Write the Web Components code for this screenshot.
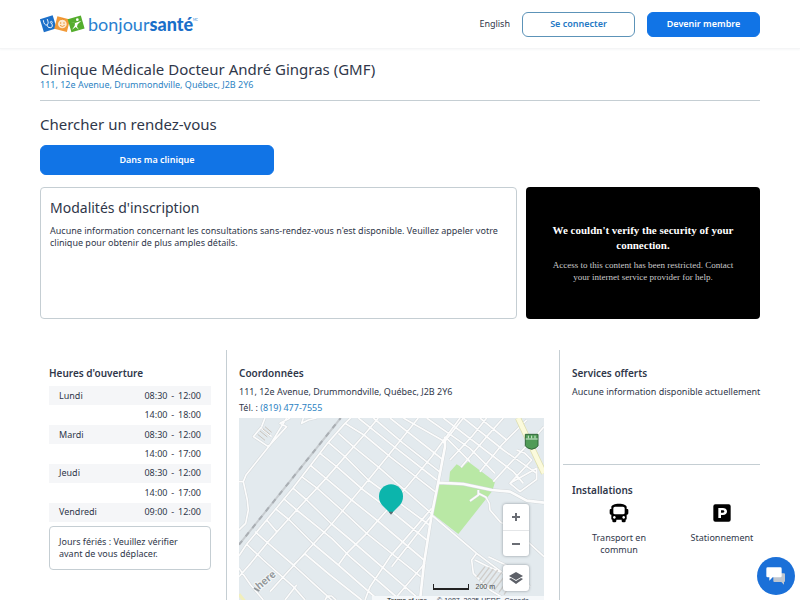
<!DOCTYPE html>
<html lang="fr">
<head>
<meta charset="utf-8">
<title>Clinique Médicale Docteur André Gingras (GMF) - Bonjour-santé</title>
<style>
  html { --ink: #2f374a; --blue: #1174e6; --link: #2d83c3; --rule: #c5ced3; }
  body { margin: 0; background: #fff; color: var(--ink); font: 9px/12px "Noto Sans", "Open Sans", sans-serif; }
</style>
</head>
<body>
<clinic-page></clinic-page>

<script>
const define = (name, html, setup) => {
  const template = document.createElement('template');
  template.innerHTML = '<style>*{box-sizing:border-box}h1,h2,h3,p{margin:0;font-weight:400}a{color:var(--link);text-decoration:none}button{font:inherit;cursor:pointer}</style>' + html;
  customElements.define(name, class extends HTMLElement {
    constructor() {
      super();
      this.attachShadow({ mode: 'open' }).append(template.content.cloneNode(true));
    }
    connectedCallback() { if (setup) setup(this, this.shadowRoot); }
  });
};

define('brand-logo', `
<style>
  :host { display: block; }
  a { display: flex; align-items: center; gap: 3px; color: #1f78d0; }
  .mark { width: 45px; height: 20px; flex: none; }
  .name { font: 18px/24px Lato, sans-serif; color: #2b80cf; }
  b { font-weight: 900; color: #1a6fc9; }
  sup { font-size: 3px; line-height: 4px; vertical-align: 10px; }
</style>
<a href="#" aria-label="bonjoursanté">
  <svg class="mark" viewBox="0 0 135 60" fill="none">
    <g transform="rotate(-17 24 30)"><rect x="5" y="9" width="40" height="41" fill="#1d70c9"/>
      <path d="M14 15q-3 15 6 17q8-2 6-17M20 32q0 11 9 11q8 0 6-12" stroke="#fff" stroke-width="2.5"/><circle cx="35" cy="28" r="3" stroke="#fff" stroke-width="2"/></g>
    <g transform="rotate(14 67 30)"><rect x="47" y="11" width="39" height="39" fill="#f29a38"/></g>
    <circle cx="67" cy="30" r="13" fill="#fde9cf"/><circle cx="62" cy="27" r="2" fill="#e88922"/><circle cx="72" cy="27" r="2" fill="#e88922"/><path d="M60 34q7 7 14 0M64 16q6-6 7 1" stroke="#e88922" stroke-width="2.5"/>
    <g transform="rotate(-16 109 30)"><rect x="88" y="9" width="41" height="41" fill="#54ad2d"/></g>
    <circle cx="112" cy="17" r="4" fill="#fff"/><path d="M92 24l13 3 9-3 10-4-11 11-2 7 6 9-10-8-11 8 8-12 1-7z" fill="#fff"/>
  </svg>
  <span class="name">bonjour<b>santé</b><sup>MC</sup></span>
</a>`);

define('action-button', `
<style>
  :host { display: block; }
  button { display: block; width: 100%; height: var(--h, 25px); border: 1px solid var(--blue); border-radius: 6px;
    background: var(--blue); color: #fff; font-weight: 600; padding: 0; }
  :host([outline]) button { background: #fff; color: #2478c4; border-color: #5c93b8; }
</style>
<button type="button"><slot></slot></button>`);

define('site-header', `
<style>
  :host { display: block; border-bottom: 1px solid #f4f5f6; box-shadow: 0 1px 2px #f6f7f8; }
  header { display: flex; align-items: center; gap: 12px; height: 48px; padding: 0 40px; }
  brand-logo { margin-right: auto; }
  a { color: var(--ink); }
  action-button { width: 113px; }
</style>
<header>
  <brand-logo></brand-logo>
  <a href="#">English</a>
  <action-button outline>Se connecter</action-button>
  <action-button>Devenir membre</action-button>
</header>`);

define('info-card', `
<style>
  :host { display: block; border: 1px solid var(--rule); border-radius: 4px; padding: 10px 9px; min-height: 132px; }
  h2 { font-size: 14px; line-height: 20px; margin-bottom: 7px; }
</style>
<h2><slot name="title"></slot></h2><p><slot></slot></p>`);

define('restricted-notice', `
<style>
  :host { display: flex; flex-direction: column; justify-content: center; gap: 6px; background: #000; color: #ccc; border-radius: 4px;
    padding: 0 24px; text-align: center; font: 9px/12px "Liberation Serif", serif; }
  h2 { color: #fff; font-weight: 700; font-size: 11px; line-height: 15px; }
</style>
<h2><slot name="title"></slot></h2><p><slot></slot></p>`);

define('opening-hours', `
<style>
  :host { display: block; }
  table { width: 100%; height: 136px; border-collapse: collapse; }
  tr:nth-child(odd) { background: #f5f6f8; }
  th, td { padding: 0 10px; font-weight: 400; text-align: left; }
  td { text-align: right; white-space: pre; }
  p { border: 1px solid var(--rule); border-radius: 4px; margin-top: 4px; padding: 9px; }
</style>
<table aria-label="Heures d'ouverture"><tbody></tbody></table>
<p>Jours fériés : Veuillez vérifier avant de vous déplacer.</p>`, (host, root) => {
  const rows = [['Lundi', '08:30', '12:00'], ['', '14:00', '18:00'], ['Mardi', '08:30', '12:00'], ['', '14:00', '17:00'],
    ['Jeudi', '08:30', '12:00'], ['', '14:00', '17:00'], ['Vendredi', '09:00', '12:00']];
  root.querySelector('tbody').innerHTML = rows.map(([d, a, b]) =>
    `<tr>${d ? `<th scope="row">${d}</th>` : '<td></td>'}<td>${a} \u2009-\u2009 ${b}</td></tr>`).join('');
});

define('clinic-map', `
<style>
  :host { display: block; position: relative; height: 188px; overflow: hidden; background: #e3eaee; font-family: "Liberation Sans", sans-serif; }
  .streets { display: block; width: 100%; height: 100%; }
  .controls { position: absolute; right: 15px; top: 86px; display: grid; gap: 9px; }
  .box { width: 26px; background: #fff; border-radius: 3px; box-shadow: 0 0 3px #8b9398; }
  button { display: grid; place-items: center; width: 100%; height: 26px; padding: 0; border: 0; background: none; }
  button + button { border-top: 1px solid #e4e6e8; }
  button svg { width: 16px; height: 16px; }
  .scale { position: absolute; right: 49px; top: 164px; display: flex; gap: 7px; align-items: center; font-size: 7px; line-height: 10px; color: #444; }
  .scale i { width: 36px; height: 6px; border: solid #222; border-width: 0 1px 2px; }
  .terms { position: absolute; right: 0; bottom: 0; display: flex; gap: 10px; padding: 0 15px; background: #f5f8fa; font-size: 7px; line-height: 10px; white-space: nowrap; }
  .terms a { color: #222; }
</style>
<svg class="streets" viewBox="27 24 915 564" preserveAspectRatio="xMinYMin slice" fill="none" role="img" aria-label="Carte">
  <path fill="#b9e8a5" d="M660 185l20-22 15 9 20-17 80 60-8 28-102 129-77-60 17-98 32 3z"/>
  <g id="r" stroke-linejoin="round">
    <path id="roads" d="M50 403L110 330L190 233L295 97L345 40L362 24
      M27 500L62 460L112 398L200 300L288 205L345 140L402 75L445 24
      M120 545L165 495L250 402L305 342L365 270L415 210L480 130L565 24
      M325 465L350 430L410 370L480 290L535 225L605 140L690 24
      M405 570L420 530L480 440L605 295
      M485 470L605 315 M500 560L585 460 M27 475L62 525L100 570 M165 570L200 525
      M27 437L50 403L100 450L190 530L225 570
      M75 365L112 398L190 465L250 520L305 570
      M110 330L140 365 M135 295L178 330L250 402L325 465L445 570
      M160 265L200 300L305 385L360 440L510 570
      M190 235L230 270L305 342L380 405L565 565
      M215 200L262 235L335 300L410 370L572 500
      M240 165L288 205L365 270L440 330L582 450
      M270 130L320 170L400 240L480 300L590 390
      M295 97L345 140L415 210L598 345
      M325 70L370 110L450 175L604 310
      M345 40L402 75L480 140L615 245
      M385 24L480 100L620 210 M430 24L520 100L628 185
      M480 24L640 150 M520 24L645 95
      M645 80L720 155 M590 24L720 115L795 190 M640 24L850 185L880 220
      M700 24L820 120L920 190 M750 24L830 90 M640 100L700 24
      M660 150L725 80L770 24 M693 172L770 80L820 24 M750 185L815 105L890 30 M790 215L840 160L925 70L942 50
      M840 220L920 175L920 208L870 245L840 220L905 150L885 130L860 120
      M225 432L300 495L395 570 M225 432L190 465
      M605 315L740 430L820 490L850 540
      M745 240L745 255L720 273 M745 250L768 262L778 280L780 300L810 335L860 365L942 440
      M170 24L160 40L120 105L48 195L40 215L52 270L55 300L47 340L27 360 M27 215L42 215
      M95 50L70 80L115 110L170 50L150 40L180 24 M95 50L105 24 M125 80L95 55 M220 24L215 40L235 30L260 24
      M740 430L725 450L730 490L780 540L830 570 M735 450L775 470L820 490 M775 440L860 480L900 530 M285 570L292 558L305 558L318 570" />
    <path id="main" d="M645 80L645 110L625 215L605 315L582 460L570 570 M625 218L700 222L785 240L840 245L890 272L942 278"/>
  </g>
  <path d="M83 73l22 18M90 63l22 18M98 56l22 18M105 50l20 17" stroke="#c9c4bd" stroke-width="3"/>
  <path d="M765 470l-25 32M778 472l-30 40M790 477l-33 43M803 480l-34 46M815 487l-34 46M827 494l-34 46M838 504l-31 43M848 514l-26 40" stroke="#cfcdca" stroke-width="4"/>
  <path d="M27 404L332 24" stroke="#c6cbcf" stroke-width="6"/><path d="M27 404L332 24" stroke="#a9aeb3" stroke-width="6" stroke-dasharray="15 17"/>
  <path d="M864 24L942 190" stroke="#dcdca8" stroke-width="18"/><path d="M864 24L942 190" stroke="#fbfadc" stroke-width="14"/>
  <path d="M27 553L55 588" stroke="#f1efbd" stroke-width="10"/>
  <path d="M886 73h38v34q-2 7-19 11q-17-4-19-11z" fill="#4f9b56" stroke="#32663a" stroke-width="3"/><path d="M887 87h36M895 77v8M905 77v8M915 77v8" stroke="#d6ecd7" stroke-width="3"/>
  <text transform="translate(88 540) rotate(-40)" font-size="32" font-weight="700" font-family="Liberation Sans, sans-serif" fill="#92979b" stroke="#f4f7f8" stroke-width="6" paint-order="stroke">here</text>
  <path d="M72 534l16 9" stroke="#92979b" stroke-width="6"/>
  <path d="M483 312L456 285Q447 275 447 259A36 36 0 0 1 519 259Q519 275 510 285Z" fill="#0cb5ac"/><path d="M476 305h14l-7 9z" fill="#5a6a70"/>
</svg>
<div class="controls">
  <div class="box">
    <button type="button" aria-label="Zoom avant"><svg viewBox="0 0 16 16"><path d="M8 4v8M4 8h8" stroke="#6a6d74" stroke-width="2"/></svg></button>
    <button type="button" aria-label="Zoom arrière"><svg viewBox="0 0 16 16"><path d="M4 8h8" stroke="#6a6d74" stroke-width="2"/></svg></button>
  </div>
  <div class="box"><button type="button" aria-label="Couches"><svg viewBox="0 0 16 16" fill="#5d6068"><path d="M8 2l7 4-7 4-7-4z"/><path d="M1 9l2-1 5 3 5-3 2 1-7 5z"/></svg></button></div>
</div>
<div class="scale"><i></i>200 m</div>
<div class="terms"><a href="#">Terms of use</a><span>© 1987–2025 HERE, Canada</span></div>`, (host, root) => {
  const g = root.querySelector('#r');
  const roads = root.querySelector('#roads'), main = root.querySelector('#main');
  const stroke = (path, color, width) => {
    const p = path.cloneNode();
    p.removeAttribute('id');
    p.setAttribute('stroke', color);
    p.setAttribute('stroke-width', width);
    return p;
  };
  g.replaceChildren(stroke(roads, '#d3d8db', 8), stroke(main, '#d3d8db', 11), stroke(roads, '#fcfcfc', 5), stroke(main, '#fcfcfc', 8));
});

define('facility-item', `
<style>
  :host { display: flex; flex-direction: column; align-items: center; gap: 9px; text-align: center; }
  ::slotted(svg) { width: 20px; height: 20px; }
</style>
<slot name="icon"></slot><span><slot></slot></span>`);

define('chat-launcher', `
<style>
  :host { position: fixed; right: 5px; bottom: 5px; }
  button { display: grid; place-items: center; width: 38px; height: 38px; border: 0; border-radius: 50%; padding: 0; background: #1b70d8; }
  svg { width: 20px; height: 20px; }
</style>
<button type="button" aria-label="Clavardage"><svg viewBox="0 0 60 60"><path d="M25 22h29q3 0 3 3v20q0 3-3 3v8l-8-8H25q-3 0-3-3V25q0-3 3-3z" fill="#bfc6cf"/><path d="M5 4h38q4 0 4 4v22q0 4-4 4H20L10 44V34H5q-4 0-4-4V8q0-4 4-4z" fill="#fff"/></svg></button>`);

define('clinic-page', `
<style>
  :host { display: block; }
  main { padding: 10px 40px 0; }
  h1, .search { font-size: 15px; line-height: 20px; }
  .address { display: block; padding-bottom: 9px; border-bottom: 1px solid var(--rule); }
  .search { margin: 13px 0 11px; }
  .book { width: 32.5%; min-width: 160px; --h: 30px; }
  .cards { display: grid; grid-template-columns: 477fr 234fr; gap: 9px; margin: 12px 0 31px; }
  .details { display: grid; grid-template-columns: 187fr 333fr 200fr; }
  .details > section { min-width: 0; }
  h3 { font-size: 10px; line-height: 14px; font-weight: 600; }
  .hours { padding: 16px 15px 30px 9px; border-right: 1px solid var(--rule); }
  .hours h3 { margin-bottom: 6px; }
  .contact { padding: 16px 15px 0 12px; border-right: 1px solid var(--rule); }
  .contact p { margin-top: 4px; }
  .contact h3, .services h3 { margin-bottom: 6px; }
  clinic-map { margin-top: 4px; }
  .side { padding-left: 3px; }
  .services { padding: 16px 0 0 9px; min-height: 115px; border-bottom: 1px solid var(--rule); white-space: nowrap; }
  .installations { padding: 18px 0 0 9px; }
  .items { display: grid; grid-template-columns: 1fr 1fr; gap: 27px; margin-top: 6px; padding: 0 0 0 9px; }
</style>
<site-header></site-header>
<main>
  <h1>Clinique Médicale Docteur André Gingras (GMF)</h1>
  <a class="address" href="#">111, 12e Avenue, Drummondville, Québec, J2B 2Y6</a>
  <h2 class="search">Chercher un rendez-vous</h2>
  <action-button class="book">Dans ma clinique</action-button>
  <div class="cards">
    <info-card><span slot="title">Modalités d'inscription</span>Aucune information concernant les consultations sans-rendez-vous n'est disponible. Veuillez appeler votre clinique pour obtenir de plus amples détails.</info-card>
    <restricted-notice><span slot="title">We couldn't verify the security of your connection.</span>Access to this content has been restricted. Contact your internet service provider for help.</restricted-notice>
  </div>
  <div class="details">
    <section class="hours"><h3>Heures d'ouverture</h3><opening-hours></opening-hours></section>
    <section class="contact">
      <h3>Coordonnées</h3>
      <p>111, 12e Avenue, Drummondville, Québec, J2B 2Y6</p>
      <p>Tél. : <a href="tel:8194777555">(819) 477-7555</a></p>
      <clinic-map></clinic-map>
    </section>
    <section class="side">
      <div class="services"><h3>Services offerts</h3><p>Aucune information disponible actuellement</p></div>
      <div class="installations"><h3>Installations</h3>
        <div class="items">
          <facility-item><svg slot="icon" viewBox="0 0 60 60"><path fill="#000" fill-rule="evenodd" d="M30 2C43 2 53 6 53 12v6h2q3 0 3 4v9q0 4-4 4h-1v12q0 3-3 3v4q0 4-4 4h-4q-4 0-4-4v-4H22v4q0 4-4 4h-4q-4 0-4-4v-4q-3 0-3-3V35H6q-4 0-4-4v-9q0-4 3-4h2v-6C7 6 17 2 30 2zM18 11q-5 0-5 5v14q0 4 5 4h24q5 0 5-4V16q0-5-5-5zM16 39a4 4 0 1 0 .1 0zM44 39a4 4 0 1 0 .1 0z"/></svg>Transport en commun</facility-item>
          <facility-item><svg slot="icon" viewBox="0 0 60 60"><path fill="#000" fill-rule="evenodd" d="M10 4h40q6 0 6 6v40q0 6-6 6H10q-6 0-6-6V10q0-6 6-6zM19 15v30h8v-9h6c7 0 12-4 12-10.500S40 15 33 15zM27 22h5c3 0 5 1 5 3.500S35 29 32 29h-5z"/></svg>Stationnement</facility-item>
        </div>
      </div>
    </section>
  </div>
</main>
<chat-launcher></chat-launcher>`);
</script>
</body>
</html>
